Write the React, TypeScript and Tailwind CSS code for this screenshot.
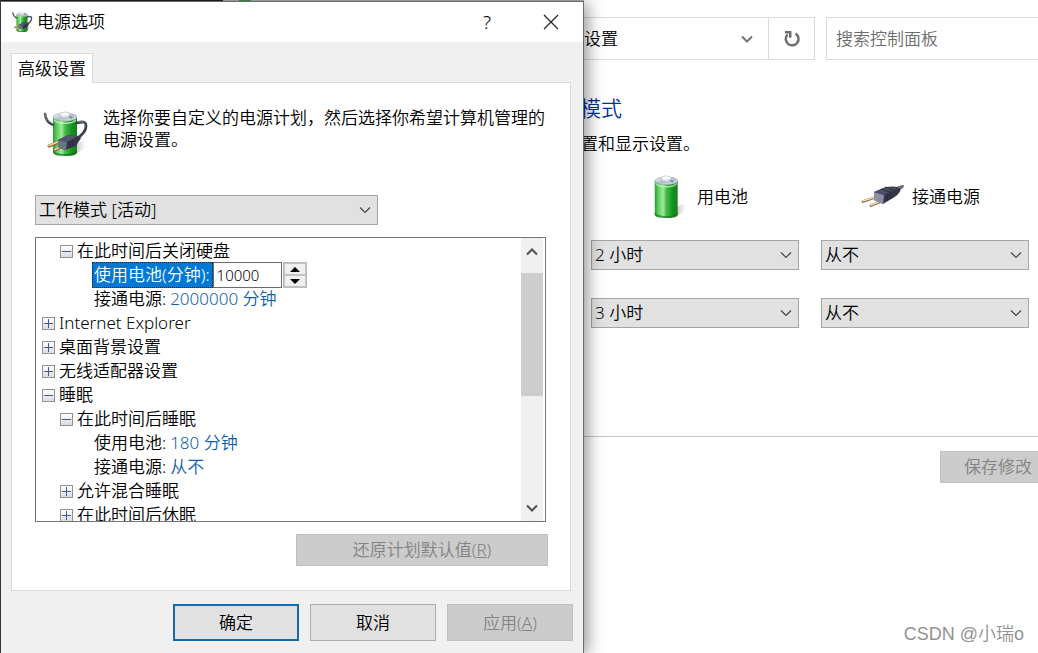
import React, { useState } from "react";

const FONT = "font-['Noto_Sans','Noto_Sans_CJK_SC',sans-serif] font-[350]";

function BatteryShape() {
  return (
    <>
      <defs>
        <linearGradient id="cell" x1="0" x2="1" y1="0" y2="0">
          <stop offset="0" stopColor="#2f9a35" />
          <stop offset="0.16" stopColor="#5fce60" />
          <stop offset="0.36" stopColor="#a2eb9c" />
          <stop offset="0.5" stopColor="#46bd48" />
          <stop offset="0.78" stopColor="#149220" />
          <stop offset="1" stopColor="#1d7c25" />
        </linearGradient>
        <linearGradient id="cap" x1="0" x2="1" y1="0" y2="1">
          <stop offset="0" stopColor="#f6f8fb" />
          <stop offset="0.5" stopColor="#b4bccb" />
          <stop offset="1" stopColor="#e9edf3" />
        </linearGradient>
        <linearGradient id="shade" x1="0" x2="1" y1="0" y2="0">
          <stop offset="0" stopColor="#777" stopOpacity="0.55" />
          <stop offset="1" stopColor="#999" stopOpacity="0" />
        </linearGradient>
      </defs>
      <path d="M32 46 L44 38 Q47 33 41 31 L32 36Z" fill="url(#shade)" />
      <path d="M12 7v35q0 4 12 4t12-4V7z" fill="url(#cell)" />
      <path d="M12 42q0 4 12 4t12-4v-2q-2 4-12 4t-12-4z" fill="#0c6b18" opacity="0.6" />
      <ellipse cx="24" cy="7" rx="12" ry="4" fill="url(#cap)" stroke="#9cabb0" strokeWidth="0.6" />
      <path d="M13 9q3 3.500 11 3.500T35 9v2q-3 3-11 3t-11-3z" fill="#d5f6d2" opacity="0.75" />
      <path d="M19 6V4q0-2 5-2t5 2v2q-1 2-5 2t-5-2z" fill="#dce1ea" stroke="#9da6b8" strokeWidth="0.5" />
      <ellipse cx="24" cy="4" rx="4.500" ry="1.600" fill="#f9fafc" />
      <path d="M27 6l6 1-3 2z" fill="#7f8aa5" />
    </>
  );
}

function BatteryIcon({ className }: { className?: string }) {
  return (
    <svg viewBox="11 1 36 46" className={className} aria-hidden="true">
      <BatteryShape />
    </svg>
  );
}

function PowerIcon({ className }: { className?: string }) {
  return (
    <svg viewBox="0 0 48 48" className={className} aria-hidden="true">
      <BatteryShape />
      <path d="M4 4q1 8 8 11" fill="none" stroke="#3d4254" strokeWidth="2.400" strokeLinecap="round" />
      <path d="M4 3q0 6 5 9" fill="none" stroke="#8d94a8" strokeWidth="0.8" strokeLinecap="round" />
      <path d="M36 13q9-3 9 3 0 7-10 13" fill="none" stroke="#3a3f52" strokeWidth="2.800" strokeLinecap="round" />
      <path d="M37 12q7-2 7 5" fill="none" stroke="#8e96ab" strokeWidth="0.8" />
      <path d="M18 32L8 36M22 36L14 40" stroke="#8f6130" strokeWidth="3" strokeLinecap="round" />
      <path d="M18 31.500L8 35.500M22 35.500L14 39.500" stroke="#f3d6a0" strokeWidth="1.600" strokeLinecap="round" />
      <path d="M17 30l10-5 11 1 2 2-5 8-11 4-7-3z" fill="#343849" />
      <path d="M17 30l9 2-1 8-8-3z" fill="#6d7284" />
      <path d="M17 30l10-5 10 1-11 6z" fill="#50566b" />
      <path d="M29 31v6M32 30v6" stroke="#222635" strokeWidth="0.8" />
    </svg>
  );
}

function PlugIcon({ className }: { className?: string }) {
  return (
    <svg viewBox="0 0 46 28" className={className} aria-hidden="true">
      <path d="M16 14L3 18.500M22 18L11 22.500" stroke="#8a6a46" strokeWidth="2.800" strokeLinecap="round" />
      <path d="M16 13.500L3 18M22 17.500L11 22" stroke="#f2dcb0" strokeWidth="1.400" strokeLinecap="round" />
      <path d="M14 9l12-5q7-1 11 0l6-2q2 2-2 4-2 6-8 9l-10 6-9-4z" fill="#34374a" />
      <path d="M14 9l10 3-1 9-9-4z" fill="#8e8fa2" />
      <path d="M14 9l12-5 11 1-13 7z" fill="#4c5066" />
      <path d="M36 4l7-2q2 2-2 4z" fill="#77716f" />
      <path d="M28 11l-1 7M31 9l-1 7M21 6l9 3M25 4l8 3" stroke="#20232f" strokeWidth="0.700" />
    </svg>
  );
}

function Chevron({ className, up, width = 1 }: { className?: string; up?: boolean; width?: number }) {
  return (
    <svg viewBox="0 0 12 8" className={className} fill="none" stroke="currentColor" strokeWidth={width} aria-hidden="true">
      <path d={up ? "M1 6.500l5-5 5 5" : "M1 1.500l5 5 5-5"} />
    </svg>
  );
}

function Dropdown({ label, options, className = "" }: { label: string; options: string[]; className?: string }) {
  return (
    <div className={`relative ${className}`}>
      <select
        aria-label={label}
        className="block h-[30px] w-full appearance-none border border-[#a5a5a5] bg-[#e1e1e1] pl-[3px] text-[17px] leading-[28px] text-black"
      >
        {options.map((o) => (
          <option key={o}>{o}</option>
        ))}
      </select>
      <Chevron width={1.2} className="pointer-events-none absolute top-[11px] right-[7px] h-2 w-3 text-[#444]" />
    </div>
  );
}

function Expander({ open, label }: { open: boolean; label: string }) {
  return (
    <button
      aria-label={label}
      aria-expanded={open}
      className="mr-1 flex size-[13px] shrink-0 items-center justify-center border border-[#919191] bg-linear-to-b from-white to-[#dcdcdc]"
    >
      <svg viewBox="0 0 9 9" className="size-[9px]" stroke="#3f5896" aria-hidden="true">
        <path d={open ? "M0 4.500h9" : "M0 4.500h9M4.500 0v9"} />
      </svg>
    </button>
  );
}

const INDENT = ["pl-1.5", "pl-6", "pl-[58px]"];

type TreeRow = { level: number; text: string; open?: boolean; value?: string };

const ROWS: TreeRow[] = [
  { level: 2, text: "接通电源:", value: "2000000 分钟" },
  { level: 0, text: "Internet Explorer", open: false },
  { level: 0, text: "桌面背景设置", open: false },
  { level: 0, text: "无线适配器设置", open: false },
  { level: 0, text: "睡眠", open: true },
  { level: 1, text: "在此时间后睡眠", open: true },
  { level: 2, text: "使用电池:", value: "180 分钟" },
  { level: 2, text: "接通电源:", value: "从不" },
  { level: 1, text: "允许混合睡眠", open: false },
  { level: 1, text: "在此时间后休眠", open: false },
];

function Row({ level, text, open, value }: TreeRow) {
  return (
    <li className={`flex h-6 items-center whitespace-nowrap ${INDENT[level]}`}>
      {open !== undefined && <Expander open={open} label={text} />}
      <span>{text}</span>
      {value && <a href="#" className="ml-1 text-[#0f5fb0]">{value}</a>}
    </li>
  );
}

function SettingsTree() {
  const [minutes, setMinutes] = useState(10000);

  return (
    <div className="mt-3 mr-6 flex h-[285px] border border-[#767676] bg-white">
      <ul className="flex-1 overflow-hidden pt-px">
        <Row level={1} text="在此时间后关闭硬盘" open />
        <li className="flex h-6 items-center pl-14">
          <label
            htmlFor="minutes"
            className="flex h-[26px] items-center border border-dotted border-[#33200a] bg-[#0078d7] pr-0.5 pl-px whitespace-nowrap text-white"
          >
            使用电池(分钟):
          </label>
          <input
            id="minutes"
            value={minutes}
            onChange={(e) => setMinutes(Number(e.target.value) || 0)}
            className="h-[26px] w-[69px] border border-[#6b6b6b] bg-white pl-[3px] text-[15px]"
          />
          <div className="ml-px flex h-[26px] w-6 flex-col border border-[#bcbcbc] bg-[#f0f0f0]">
            <button aria-label="增加" onClick={() => setMinutes(minutes + 1)} className="flex flex-1 items-center justify-center border border-[#c3c3c3]">
              <svg viewBox="0 0 10 5" className="h-[5px] w-2.5" aria-hidden="true"><path d="M0 5l5-5 5 5z" /></svg>
            </button>
            <button aria-label="减少" onClick={() => setMinutes(minutes - 1)} className="flex flex-1 items-center justify-center border border-[#c3c3c3]">
              <svg viewBox="0 0 10 5" className="h-[5px] w-2.5" aria-hidden="true"><path d="M0 0l5 5 5-5z" /></svg>
            </button>
          </div>
        </li>
        {ROWS.map((row, i) => (
          <Row key={i} {...row} />
        ))}
      </ul>
      <div className="mr-0.5 flex w-[22px] flex-col bg-[#f0f0f0]">
        <button aria-label="向上滚动" className="flex h-[35px] items-center justify-center pb-2 text-[#505050]">
          <Chevron up width={2} className="h-2 w-3" />
        </button>
        <div className="h-[123px] bg-[#cdcdcd]" />
        <button aria-label="向下滚动" className="mt-auto flex h-[26px] items-center justify-center text-[#505050]">
          <Chevron width={2} className="h-2 w-3" />
        </button>
      </div>
    </div>
  );
}

function PowerDialog() {
  return (
    <div
      role="dialog"
      aria-label="电源选项"
      className="relative z-10 mt-px flex w-[584px] shrink-0 flex-col border border-b-0 border-[#6b6b6b] border-l-[#3a3536] bg-[#f0f0f0] shadow-[3px_2px_16px_rgba(0,0,0,0.45)]"
    >
      <div className="flex h-10 items-center bg-white pl-2.5">
        <PowerIcon className="size-[22px]" />
        <h1 className="ml-1 flex-1">电源选项</h1>
        <button aria-label="帮助" className="w-8 text-[19px]">?</button>
        <button aria-label="关闭" className="mr-3 ml-7 flex size-10 items-center justify-center">
          <svg viewBox="0 0 16 16" className="size-4" stroke="#222" strokeWidth="1.200" aria-hidden="true">
            <path d="M1 1l14 14M15 1L1 15" />
          </svg>
        </button>
      </div>

      <div role="tablist" className="mt-[11px] flex px-2.5">
        <button role="tab" aria-selected="true" className="relative z-10 -mb-px h-[30px] border border-b-0 border-[#d9d9d9] bg-white px-1.5 leading-[22px]">
          高级设置
        </button>
      </div>

      <div className="mr-3 ml-2.5 border border-[#d9d9d9] bg-white pt-6 pb-6 pl-[23px]">
        <div className="flex h-[51px] pr-5 pl-1.5">
          <PowerIcon className="mt-[3px] size-12 shrink-0" />
          <p className="ml-3.5 leading-[22px]">
            选择你要自定义的电源计划，然后选择你希望计算机管理的电源设置。
          </p>
        </div>
        <Dropdown label="电源计划" options={["工作模式 [活动]"]} className="mt-[37px] w-[343px]" />
        <SettingsTree />
        <div className="mt-3 mr-[22px] flex justify-end">
          <button disabled className="h-8 w-[252px] border border-[#bfbfbf] bg-[#cccccc] text-[#838383]">
            还原计划默认值(<u>R</u>)
          </button>
        </div>
      </div>

      <div className="mt-[13px] mr-2.5 mb-3 flex justify-end gap-[11px]">
        <button className="h-[37px] w-[126px] border-2 border-[#0f6cb0] bg-[#e1e1e1]">确定</button>
        <button className="h-[37px] w-[126px] border border-[#adadad] bg-[#e1e1e1]">取消</button>
        <button disabled className="h-[37px] w-[126px] border border-[#bfbfbf] bg-[#cccccc] text-[#838383]">
          应用(<u>A</u>)
        </button>
      </div>
    </div>
  );
}

function ControlPanel() {
  return (
    <main className="min-w-0 flex-1 bg-white pt-[17px]">
      <div className="flex h-[43px]">
        <div className="flex w-[231px] shrink-0 border border-l-0 border-[#d9d9d9]">
          <span className="flex flex-1 items-center">设置</span>
          <button aria-label="历史记录" className="mr-3.5 text-[#737373]">
            <Chevron width={2} className="h-2 w-3.5" />
          </button>
          <button aria-label="刷新" className="flex w-[46px] items-center justify-center border-l border-[#d9d9d9]">
            <svg viewBox="0 0 18 18" className="size-[18px]" fill="none" stroke="#6e6e6e" strokeWidth="2.500" aria-hidden="true">
              <path d="M12.500 3.500a6.400 6.400 0 1 1-8 1" />
              <path d="M2 2.200h5.200v5.600" />
            </svg>
          </button>
        </div>
        <input
          aria-label="搜索控制面板"
          placeholder="搜索控制面板"
          className="ml-[11px] min-w-0 flex-1 border border-r-0 border-[#d9d9d9] pl-[9px] placeholder:text-[#6d6d6d]"
        />
      </div>

      <h2 className="mt-9 -ml-1 text-[21px] leading-6 text-[#003399]">模式</h2>
      <p className="mt-3 -ml-[3px] leading-6">置和显示设置。</p>

      <div className="mt-[17px] grid grid-cols-[208px_208px] gap-x-[22px] gap-y-7 pl-[7px]">
        <div className="-mb-[9px] flex h-12 items-center pl-[62px]">
          <BatteryIcon className="h-11 w-9" />
          <span className="ml-2">用电池</span>
        </div>
        <div className="-mb-[9px] flex h-12 items-center pl-[39px]">
          <PlugIcon className="h-7 w-[46px]" />
          <span className="ml-1.5">接通电源</span>
        </div>
        <Dropdown label="用电池关闭显示器" options={["2 小时"]} />
        <Dropdown label="接通电源关闭显示器" options={["从不"]} />
        <Dropdown label="用电池进入睡眠" options={["3 小时"]} />
        <Dropdown label="接通电源进入睡眠" options={["从不"]} />
      </div>

      <div className="mt-[108px] flex border-t border-[#c4c4c4] pt-3.5 pl-[356px]">
        <button disabled className="h-8 shrink-0 border border-[#bfbfbf] bg-[#cccccc] px-[23px] text-[#838383]">
          保存修改
        </button>
      </div>
    </main>
  );
}

export default function App() {
  return (
    <div className={`relative flex min-h-screen overflow-hidden bg-white text-[17px] leading-6 text-black ${FONT}`}>
      <div className="absolute top-0 left-0 flex h-px w-[584px] bg-[#b8b8b8]">
        <div className="w-[223px] bg-[#241c1c]" />
        <div className="ml-4 w-3 bg-[#3c9c44]" />
      </div>
      <PowerDialog />
      <ControlPanel />
      <span className="absolute right-[14px] bottom-[7px] font-['Liberation_Sans','Noto_Sans_CJK_SC',sans-serif] text-[18px] text-[#929292]">
        CSDN @小瑞o
      </span>
    </div>
  );
}
